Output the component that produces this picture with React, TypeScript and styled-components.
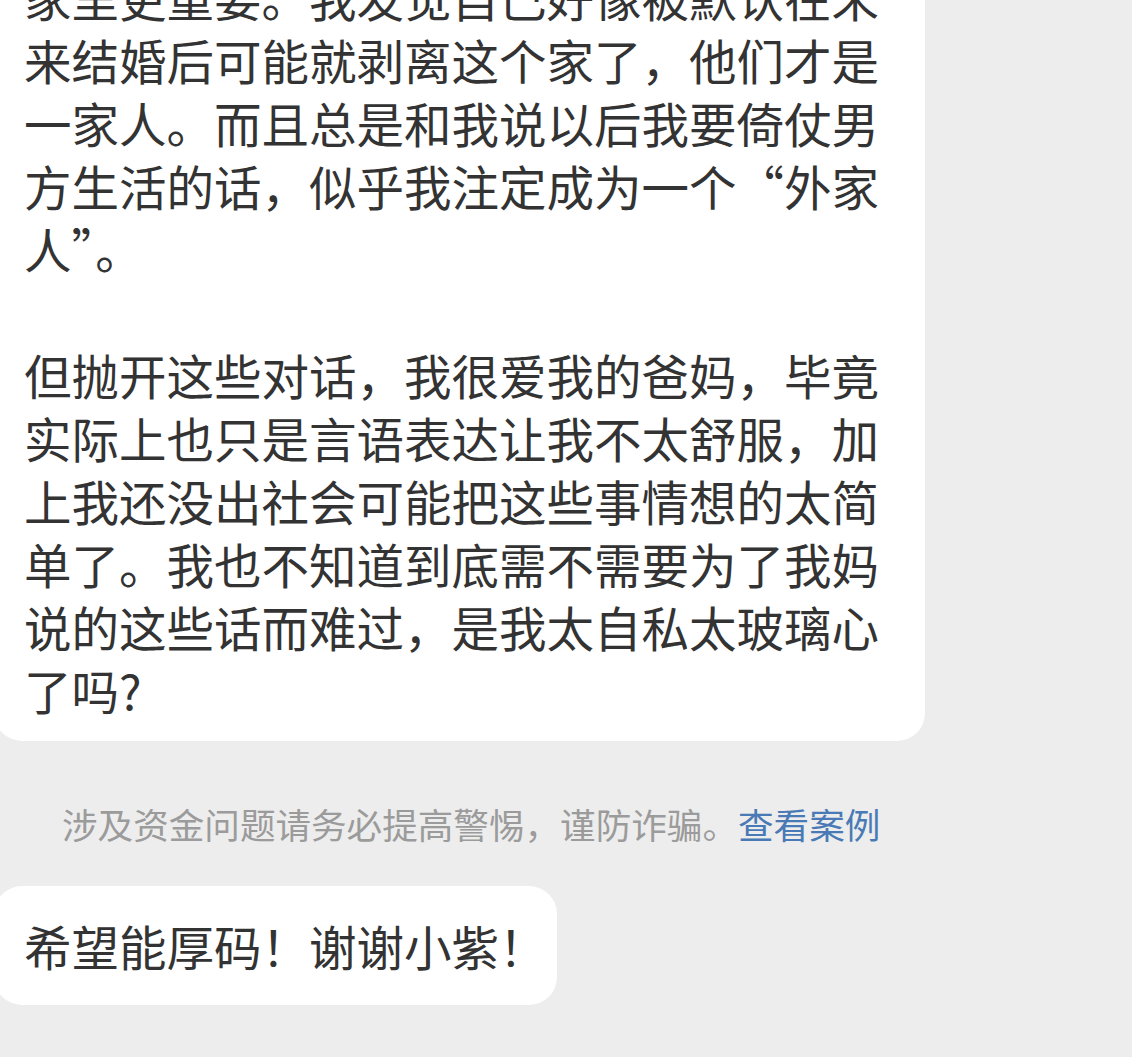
import styled, { createGlobalStyle } from 'styled-components'

const GlobalStyle = createGlobalStyle`
  html, body {
    margin: 0;
    padding: 0;
    background: #ededed;
  }
  body {
    font-family: 'Noto Sans CJK SC', 'Noto Sans', sans-serif;
  }
`

const question = [
  ['家里更重要。我发觉自己好像被默认在未', '来结婚后可能就剥离这个家了，他们才是', '一家人。而且总是和我说以后我要倚仗男', '方生活的话，似乎我注定成为一个“外家', '人”。'],
  ['但抛开这些对话，我很爱我的爸妈，毕竟', '实际上也只是言语表达让我不太舒服，加', '上我还没出社会可能把这些事情想的太简', '单了。我也不知道到底需不需要为了我妈', '说的这些话而难过，是我太自私太玻璃心', '了吗?'],
]

export default function App() {
  return (
    <>
      <GlobalStyle />
      <Chat>
        <Bubble $pad={'0 46px 20px 30px'} $gap={63}>
          {question.map((para, i) => (
            <Paragraph key={i}>
              {para.map((line) => (
                <Line key={line}>{line}</Line>
              ))}
            </Paragraph>
          ))}
        </Bubble>
        <Notice>
          涉及资金问题请务必提高警惕，谨防诈骗。<Link>查看案例</Link>
        </Notice>
        <Bubble $pad={'28px 10px 28px 30px'} $gap={0}>
          <Line>希望能厚码！谢谢小紫！</Line>
        </Bubble>
      </Chat>
    </>
  )
}

const Chat = styled.div`
  height: 1057px;
  overflow: hidden;
  display: flex;
  flex-direction: column;
  justify-content: flex-end;
  align-items: flex-start;
  padding-bottom: 52px;
  box-sizing: border-box;
`
const Bubble = styled.div<{ $pad: string; $gap: number }>`
  display: flex;
  flex-direction: column;
  gap: ${(p) => p.$gap}px;
  flex-shrink: 0;
  margin-left: -6px;
  padding: ${(p) => p.$pad};
  background: #ffffff;
  border-radius: 28px;
  color: #333333;
  font-size: 47.5px;
  line-height: 63px;
`
const Paragraph = styled.div`
  display: flex;
  flex-direction: column;
`
const Line = styled.span`
  white-space: nowrap;
`
const Notice = styled.div`
  flex-shrink: 0;
  margin: 58px 0 37px 62px;
  font-size: 35.6px;
  line-height: 50px;
  color: #9b9b9b;
  white-space: nowrap;
`
const Link = styled.span`
  color: #4a7ab5;
`
